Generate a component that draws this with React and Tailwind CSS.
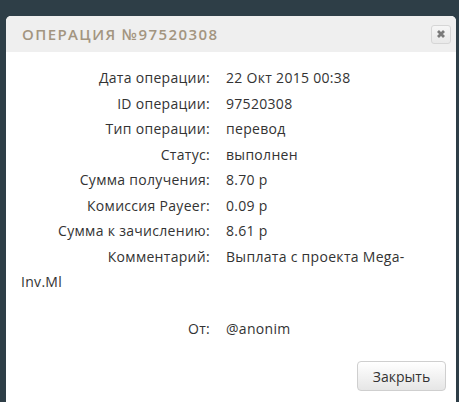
import React from 'react';

const rows = [
  ['Дата операции:', '22 Окт 2015 00:38'],
  ['ID операции:', '97520308'],
  ['Тип операции:', 'перевод'],
  ['Статус:', 'выполнен'],
  ['Сумма получения:', '8.70 р'],
  ['Комиссия Payeer:', '0.09 р'],
  ['Сумма к зачислению:', '8.61 р'],
  ['Комментарий:', 'Выплата с проекта Mega-Inv.Ml'],
];

const Row = ({ label, value }) => (
  <div className="leading-[25.5px]">
    <span className="inline-block w-[189px] text-right mr-[16px]">{label}</span>
    {value}
  </div>
);

export default function App() {
  return (
    <div className="w-[459px] h-[402px] overflow-hidden bg-[#2e3e47] pl-[6px] pt-[16px]" style={{ fontFamily: '"Open Sans", sans-serif' }}>
      <div className="w-[450px] h-[400px] bg-white rounded-t-[5px] overflow-hidden">
        <div className="h-[36px] bg-[#efefef] flex items-center justify-between pl-[16px] pr-[5px]">
          <h1 className="text-[15px] font-semibold tracking-[1.4px] text-[#a39580] uppercase">Операция №97520308</h1>
          <button className="w-[20px] h-[19px] rounded-[3px] border border-[#d6d6d6] bg-gradient-to-b from-[#f6f6f6] to-[#e9e9e9] flex items-center justify-center">
            <svg width="10" height="10" viewBox="0 0 10 10">
              <path d="M2 2 L8 8 M8 2 L2 8" stroke="#7a7a7a" strokeWidth="2.8" strokeLinecap="butt" />
            </svg>
          </button>
        </div>
        <div className="px-[15px] pt-[13px] text-[14px] text-[#333]">
          <div className="pr-[20px] tracking-[0.3px]">
            {rows.map(([l, v]) => (
              <Row key={l} label={l} value={v} />
            ))}
            <div className="mt-[21px]">
              <Row label="От:" value="@anonim" />
            </div>
          </div>
          <div className="flex justify-end mt-[20px] mr-[-5px]">
            <button className="w-[89px] h-[30px] rounded-[4px] border border-[#cfcfcf] bg-gradient-to-b from-white to-[#e6e6e6] text-[14px] text-[#333]">
              Закрыть
            </button>
          </div>
        </div>
      </div>
    </div>
  );
}
